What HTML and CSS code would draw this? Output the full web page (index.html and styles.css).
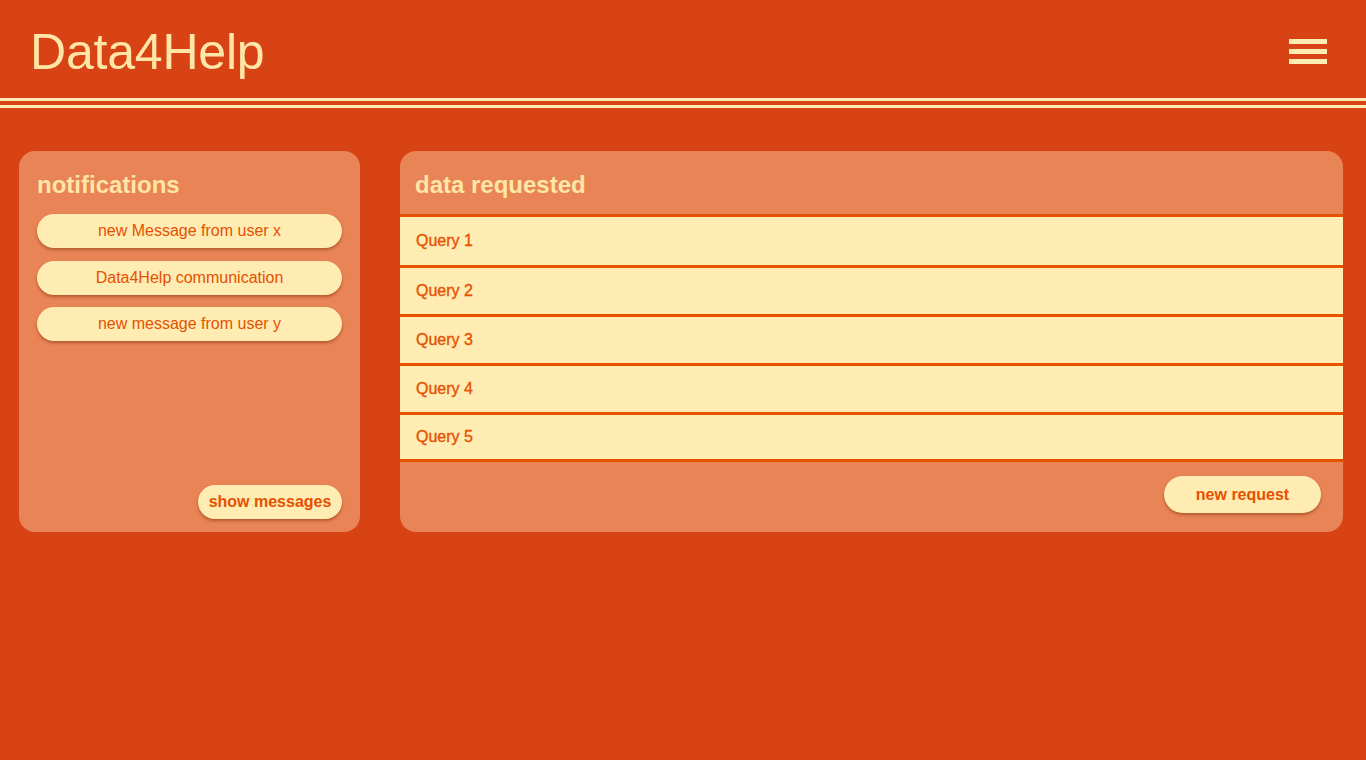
FILE: index.html
```html
<!DOCTYPE html>
<html lang="en">
<head>
<meta charset="utf-8">
<title>Data4Help</title>
<link rel="stylesheet" href="styles.css">
</head>
<body>
<header class="topbar">
  <h1 class="brand">Data4Help</h1>
  <button class="menu" aria-label="menu">
    <span></span><span></span><span></span>
  </button>
</header>
<main class="content">
  <section class="card notifications">
    <h2 class="card-title">notifications</h2>
    <ul class="pill-list">
      <li class="pill">new Message from user x</li>
      <li class="pill">Data4Help communication</li>
      <li class="pill">new message from user y</li>
    </ul>
    <div class="card-actions">
      <button class="btn">show messages</button>
    </div>
  </section>
  <section class="card requests">
    <h2 class="card-title requests-title">data requested</h2>
    <ul class="query-list">
      <li class="query">Query 1</li>
      <li class="query">Query 2</li>
      <li class="query">Query 3</li>
      <li class="query">Query 4</li>
      <li class="query">Query 5</li>
    </ul>
    <div class="requests-footer">
      <button class="btn btn-large">new request</button>
    </div>
  </section>
</main>
</body>
</html>
```

FILE: styles.css
```css
* { box-sizing: border-box; }

html, body {
  margin: 0;
  padding: 0;
  height: 100%;
}

body {
  background: #D84315;
  font-family: "Liberation Sans", Arial, Helvetica, sans-serif;
  color: #FFECB3;
}

.topbar {
  height: 108px;
  border-bottom: 10px double #FFECB3;
  display: flex;
  justify-content: space-between;
  align-items: flex-start;
  padding: 22px 39px 0 30px;
}

.brand {
  margin: 0;
  font-size: 50px;
  line-height: 60px;
  font-weight: normal;
  color: #FFE6A6;
  letter-spacing: -0.2px;
}

.menu {
  margin-top: 17px;
  width: 38px;
  padding: 0;
  border: 0;
  background: transparent;
  display: flex;
  flex-direction: column;
  gap: 5px;
}

.menu span {
  display: block;
  height: 5px;
  width: 38px;
  background: #FFECB3;
}

.content {
  display: flex;
  align-items: flex-start;
  gap: 40px;
  padding: 43px 23px 0 19px;
}

.card {
  background: #E88455;
  border-radius: 16px;
  height: 381px;
  display: flex;
  flex-direction: column;
  overflow: hidden;
}

.card-title {
  margin: 0;
  font-size: 24px;
  line-height: 28px;
  font-weight: bold;
  color: #FFE6A6;
}

.notifications {
  width: 341px;
  flex: none;
  padding: 20px 18px 13px 18px;
}

.pill-list {
  list-style: none;
  margin: 15px 0 0 0;
  padding: 0;
  display: flex;
  flex-direction: column;
  gap: 12.5px;
}

.pill {
  height: 34px;
  border-radius: 17px;
  background: #FFECB3;
  color: #E65100;
  font-size: 16px;
  display: flex;
  align-items: center;
  justify-content: center;
  box-shadow: 0 2px 3px rgba(120, 40, 0, 0.45);
}

.card-actions {
  margin-top: auto;
  display: flex;
  justify-content: flex-end;
}

.btn {
  font-family: "Liberation Sans", Arial, Helvetica, sans-serif;
  font-size: 16px;
  font-weight: bold;
  color: #E65100;
  background: #FFECB3;
  border: 0;
  height: 34px;
  width: 144px;
  border-radius: 17px;
  padding: 0;
  box-shadow: 0 2px 3px rgba(120, 40, 0, 0.45);
}

.btn-large {
  width: 157px;
  height: 37px;
  border-radius: 18.5px;
}

.requests {
  flex: 1;
}

.requests-title {
  height: 63px;
  padding: 20px 15px 0 15px;
}

.query-list {
  list-style: none;
  margin: 0;
  padding: 0;
  border-top: 3px solid #E65100;
}

.query {
  height: 49px;
  background: #FFECB3;
  border-bottom: 3px solid #E65100;
  color: #E65100;
  font-size: 16px;
  font-weight: normal;
  -webkit-text-stroke: 0.35px #E65100;
  padding-left: 16px;
  display: flex;
  align-items: center;
}

.query:first-child {
  height: 51px;
}

.query:last-child {
  height: 47px;
}

.requests-footer {
  display: flex;
  justify-content: flex-end;
  padding: 14px 22px 0 0;
}
```
